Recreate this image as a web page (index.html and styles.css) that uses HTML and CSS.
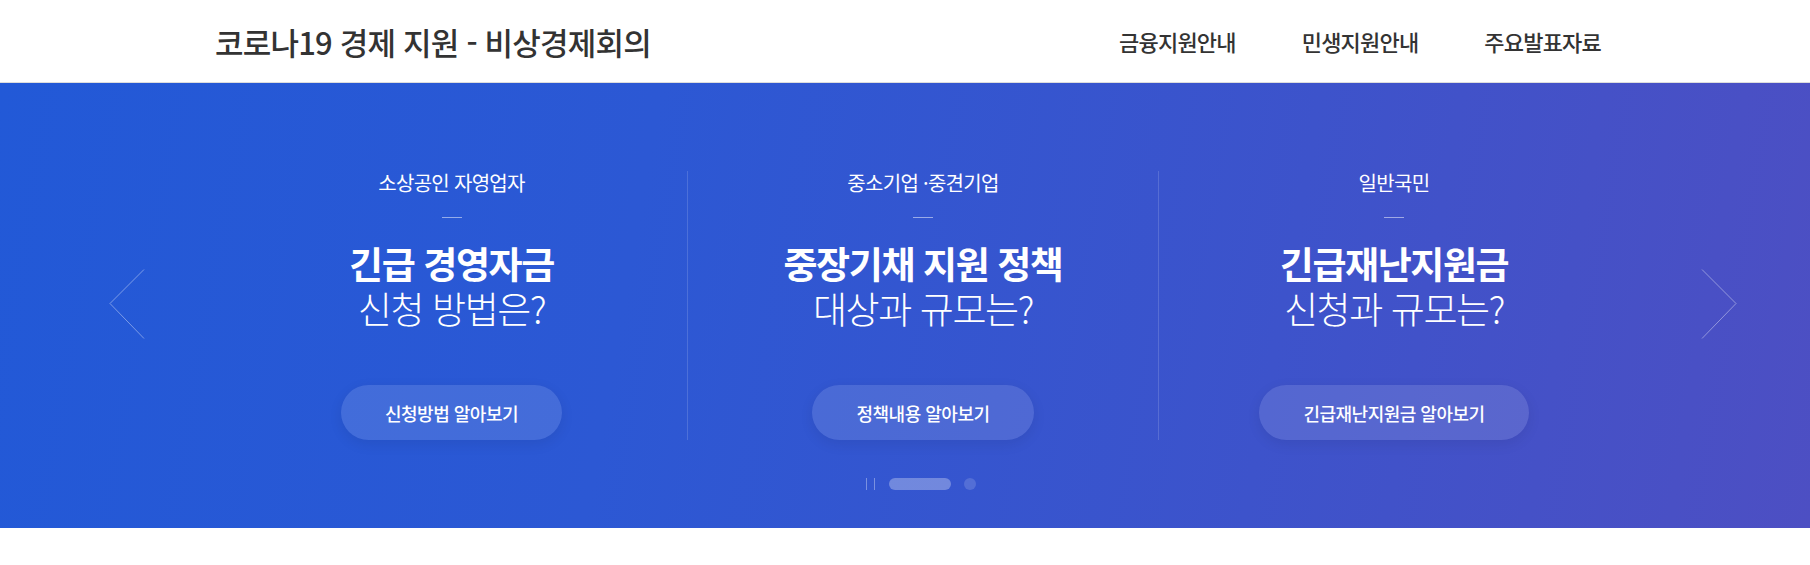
FILE: index.html
```html
<!DOCTYPE html>
<html lang="ko">
<head>
  <meta charset="UTF-8">
  <meta name="viewport" content="width=device-width, initial-scale=1.0">
  <title>코로나19 경제 지원 - 비상경제회의</title>
  <link rel="stylesheet" href="styles.css">
</head>
<body>
  <header class="top">
    <h1 class="logo">코로나19 경제 지원 - 비상경제회의</h1>
    <nav class="gnb">
      <a href="#">금융지원안내</a>
      <a href="#">민생지원안내</a>
      <a href="#">주요발표자료</a>
    </nav>
  </header>

  <section class="visual">
    <!-- prev / next sit over the slider -->
    <a href="#" class="arrow prev" aria-label="이전">
      <svg width="36" height="70" viewBox="0 0 36 70"><polyline points="35,0.5 1,34.5 35,69.5" /></svg>
    </a>
    <a href="#" class="arrow next" aria-label="다음">
      <svg width="36" height="70" viewBox="0 0 36 70"><polyline points="1,0.5 35,34.5 1,69.5" /></svg>
    </a>

    <div class="slides">
      <div class="slide">
        <p class="target">소상공인 자영업자</p>
        <span class="bar"></span>
        <h2 class="head"><strong>긴급 경영자금</strong>신청 방법은?</h2>
        <a href="#" class="btn">신청방법 알아보기</a>
      </div>
      <div class="slide">
        <p class="target">중소기업 ·중견기업</p>
        <span class="bar"></span>
        <h2 class="head"><strong>중장기채 지원 정책</strong>대상과 규모는?</h2>
        <a href="#" class="btn">정책내용 알아보기</a>
      </div>
      <div class="slide">
        <p class="target">일반국민</p>
        <span class="bar"></span>
        <h2 class="head"><strong>긴급재난지원금</strong>신청과 규모는?</h2>
        <a href="#" class="btn">긴급재난지원금 알아보기</a>
      </div>
    </div>

    <div class="paging">
      <span class="pause"></span>
      <span class="dot on"></span>
      <span class="dot"></span>
    </div>
  </section>
</body>
</html>
```

FILE: styles.css
```css
* {
  box-sizing: border-box;
}
body {
  margin: 0;
  font-family: "Noto Sans CJK KR", "Noto Sans", sans-serif;
  background: #fff;
}
a {
  color: inherit;
  text-decoration: none;
}

/* header */
.top {
  display: flex;
  align-items: center;
  justify-content: space-between;
  height: 83px;
  padding: 0 209px 0 215px;
  border-bottom: 1px solid #ddd;
}
.logo {
  margin: 0;
  font-size: 31px;
  font-weight: 500;
  letter-spacing: -.8px;
  color: #333;
}
.gnb {
  display: flex;
  gap: 66px;
}
.gnb a {
  font-size: 22px;
  font-weight: 500;
  letter-spacing: -.8px;
  color: #333;
}

/* visual */
.visual {
  position: relative;
  height: 445px;
  padding-top: 88px;
  background: linear-gradient(100deg, #2259d7 0%, #2c58d4 35%, #3d53cb 70%, #4d4fc3 100%);
  color: #fff;
}
.slides {
  display: grid;
  grid-template-columns: repeat(3, 1fr);
  width: 1413px;
  margin-left: 216px;
}
.slide {
  display: flex;
  flex-direction: column;
  align-items: center;
  height: 269px;
}
.slide + .slide {
  border-left: 1px solid rgba(255, 255, 255, .15);
}
.target {
  margin: 0;
  font-size: 20px;
  line-height: 24px;
  font-weight: 400;
  letter-spacing: -.7px;
}
.bar {
  width: 20px;
  height: 1px;
  margin-top: 22px;
  background: rgba(255, 255, 255, .5);
}
.head {
  margin: 23px 0 0;
  font-size: 37px;
  line-height: 45px;
  font-weight: 300;
  letter-spacing: -1.4px;
  text-align: center;
}
.head strong {
  display: block;
  font-weight: 700;
}
.btn {
  display: flex;
  align-items: center;
  height: 55px;
  margin-top: auto;
  padding: 0 44px;
  border-radius: 28px;
  background: rgba(255, 255, 255, .12);
  box-shadow: 0 4px 14px rgba(0, 0, 0, .08);
  font-size: 18px;
  font-weight: 500;
  letter-spacing: -.5px;
}

.arrow {
  position: absolute;
  top: 186px;
  line-height: 0;
}
.arrow polyline {
  fill: none;
  stroke: rgba(255, 255, 255, .4);
  stroke-width: 1;
}
.prev {
  left: 109px;
}
.next {
  left: 1701px;
}

.paging {
  display: flex;
  align-items: center;
  justify-content: center;
  gap: 13px;
  width: 1413px;
  margin: 38px 0 0 214px;
}
.pause {
  width: 9px;
  height: 12px;
  border-left: 1px solid rgba(255, 255, 255, .35);
  border-right: 1px solid rgba(255, 255, 255, .35);
  margin-right: 1px;
}
.dot {
  width: 12px;
  height: 12px;
  border-radius: 6px;
  background: rgba(255, 255, 255, .15);
}
.dot.on {
  width: 62px;
  background: rgba(255, 255, 255, .3);
}
```
